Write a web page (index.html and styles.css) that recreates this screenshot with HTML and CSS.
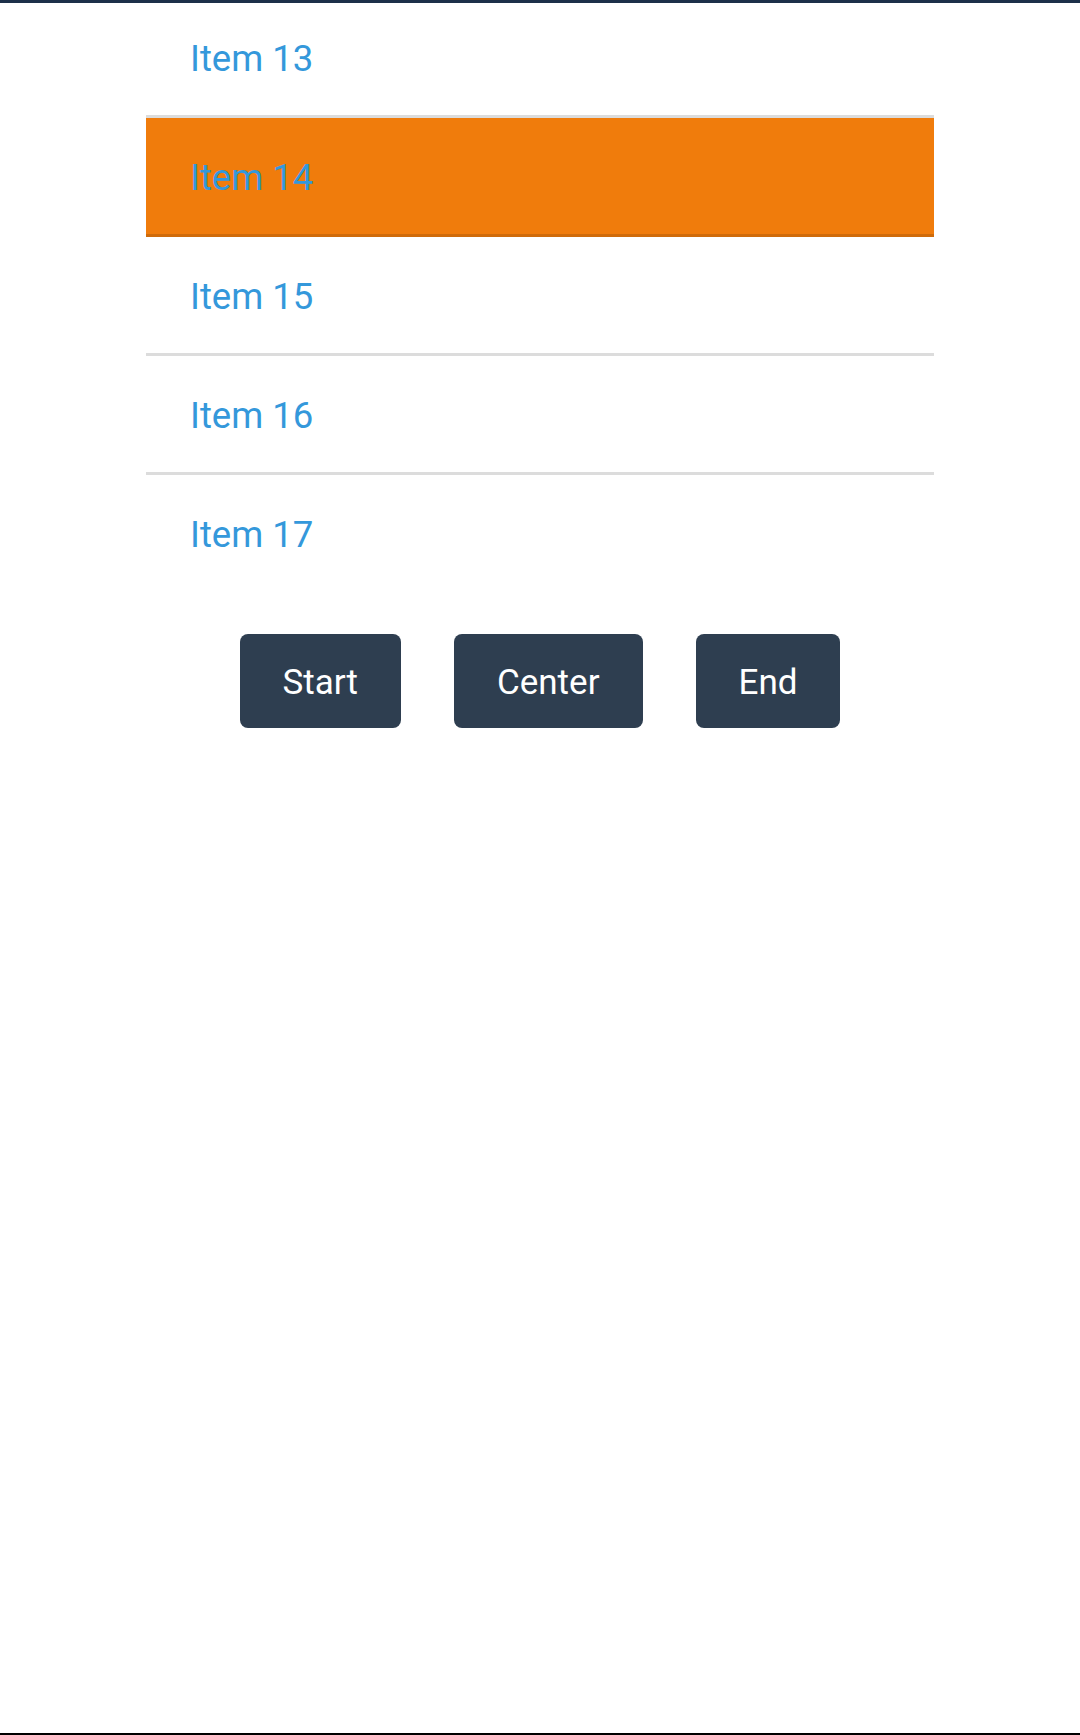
FILE: index.html
```html
<!DOCTYPE html>
<html>
<head>
<meta charset="utf-8">
<link rel="stylesheet" href="styles.css">
</head>
<body>
<div class="topbar"></div>
<main class="screen">
  <ul class="list">
    <li class="row">Item 13</li>
    <li class="row row-active">Item 14</li>
    <li class="row">Item 15</li>
    <li class="row">Item 16</li>
    <li class="row">Item 17</li>
  </ul>
  <div class="actions">
    <button class="btn">Start</button>
    <button class="btn">Center</button>
    <button class="btn">End</button>
  </div>
</main>
<div class="bottombar"></div>
</body>
</html>
```
FILE: styles.css
```css
html, body {
  margin: 0;
  padding: 0;
  background: #ffffff;
}
body {
  width: 1080px;
  height: 1735px;
  overflow: hidden;
  font-family: Roboto, "Noto Sans", "Liberation Sans", sans-serif;
}
.topbar {
  position: fixed;
  top: 0;
  left: 0;
  right: 0;
  height: 3px;
  background: #1c3049;
  z-index: 2;
}
.bottombar {
  position: fixed;
  bottom: 0;
  left: 0;
  right: 0;
  height: 2px;
  background: #000000;
  z-index: 2;
}
.screen {
  display: flex;
  flex-direction: column;
  align-items: center;
}
.list {
  list-style: none;
  margin: -1px 0 0 0;
  padding: 0;
  width: 788px;
}
.row {
  height: 114px;
  padding-top: 2px;
  display: flex;
  align-items: center;
  padding-left: 44px;
  font-size: 36.5px;
  color: #3498db;
  border-bottom: 3px solid rgba(0, 0, 0, 0.137);
}
.row:last-child {
  border-bottom: none;
}
.row-active {
  background: #f07c0c;
}
.actions {
  display: flex;
  justify-content: center;
  gap: 53px;
  margin-top: 43px;
}
.btn {
  box-sizing: border-box;
  height: 94px;
  padding: 3px 43px 0;
  border: none;
  border-radius: 8px;
  background: #2e3e50;
  color: #ffffff;
  font-family: Roboto, "Noto Sans", "Liberation Sans", sans-serif;
  font-size: 35px;
}
```
